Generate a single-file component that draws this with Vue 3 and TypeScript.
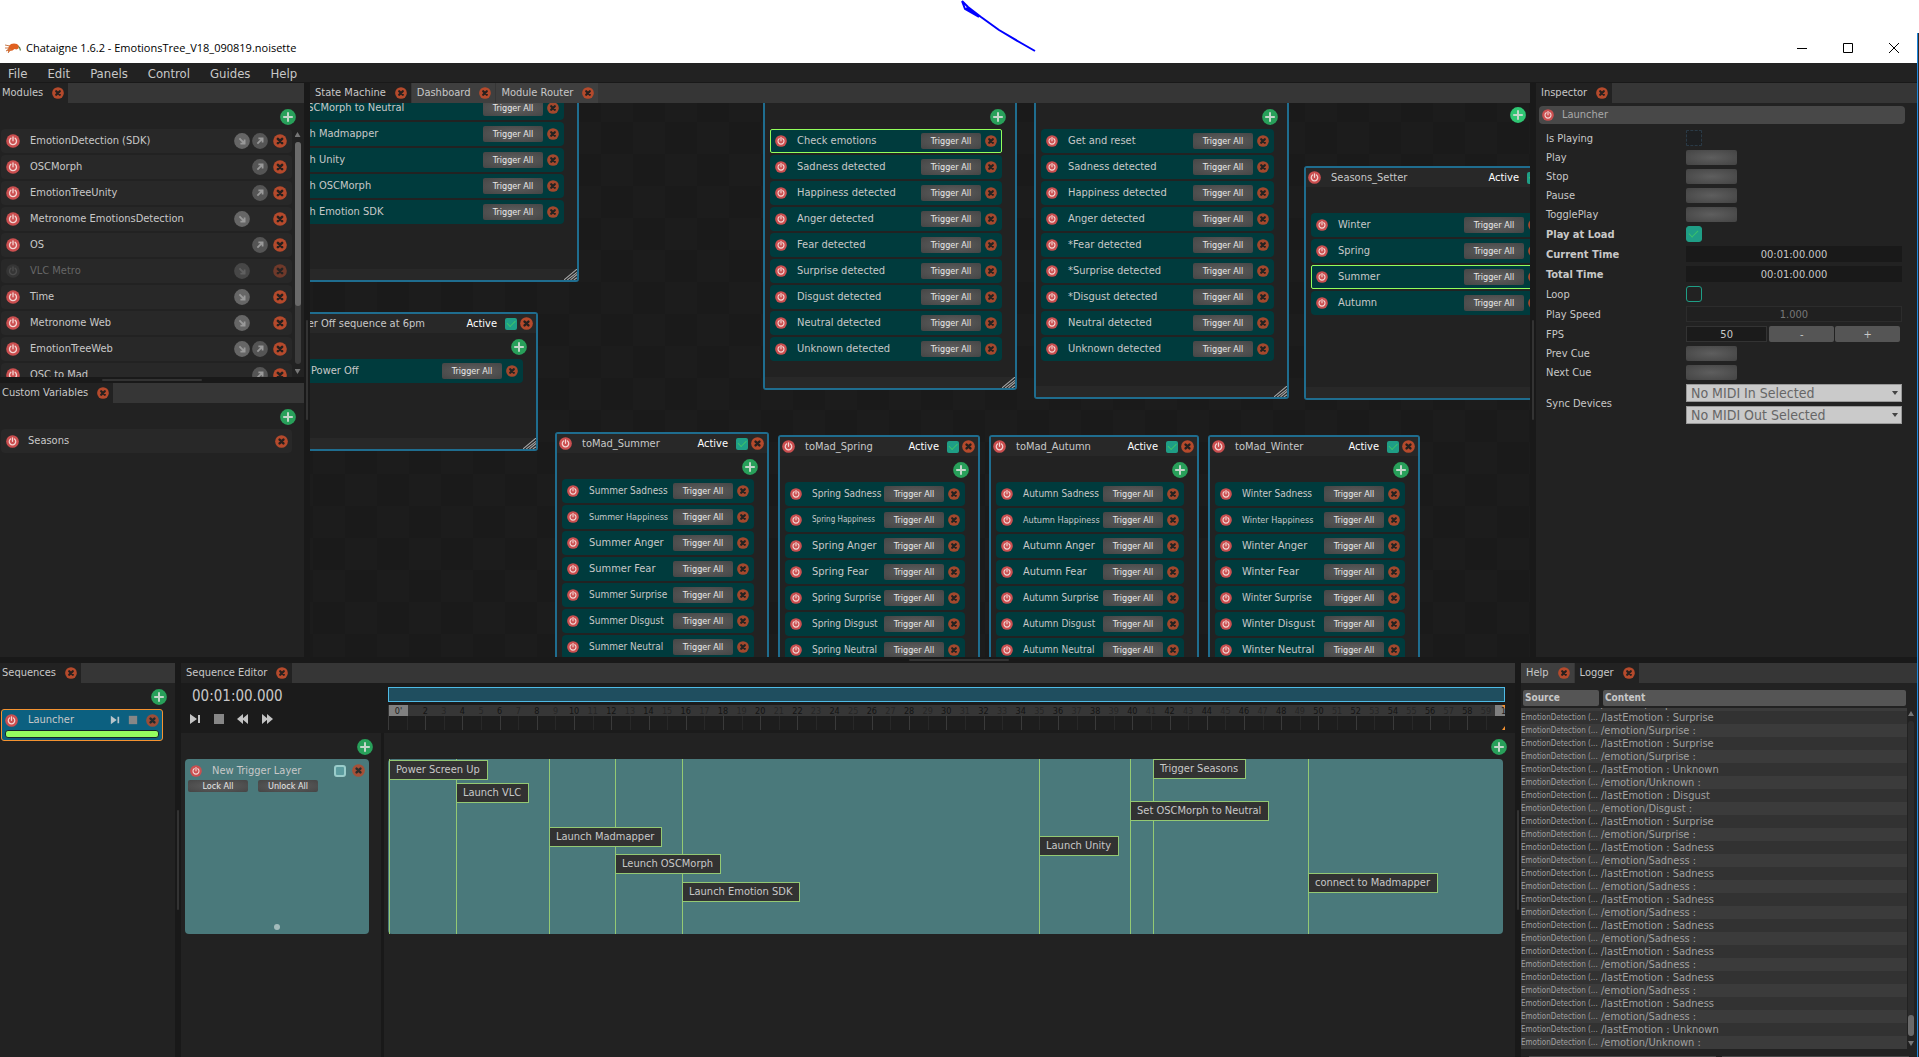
<script setup lang="ts">
interface ModuleItem {
  name: string
  input?: boolean
  output?: boolean
  off?: boolean
}

interface StateRow {
  label: string
  size?: 'md' | 'sm' | 'xs'
  current?: boolean
}

interface StateBox {
  name?: string
  left: number
  top: number
  width: number
  height: number
  rows: StateRow[]
}

interface Cue {
  name: string
  at: number
  y: number
}

const menus = ['File', 'Edit', 'Panels', 'Control', 'Guides', 'Help']

const modules: ModuleItem[] = [
  { name: 'EmotionDetection (SDK)', input: true, output: true },
  { name: 'OSCMorph', output: true },
  { name: 'EmotionTreeUnity', output: true },
  { name: 'Metronome EmotionsDetection', input: true },
  { name: 'OS', output: true },
  { name: 'VLC Metro', input: true, off: true },
  { name: 'Time', input: true },
  { name: 'Metronome Web', input: true },
  { name: 'EmotionTreeWeb', input: true, output: true },
  { name: 'OSC to Mad', output: true },
]

const emotions = ['Sadness', 'Happiness', 'Anger', 'Fear', 'Surprise', 'Disgust', 'Neutral']

function rows(...labels: string[]): StateRow[] {
  return labels.map((label) => ({ label }))
}

function seasonRows(season: string, sizes: StateRow['size'][]): StateRow[] {
  return emotions.map((e, i) => ({ label: `${season} ${e}`, size: sizes[i] }))
}

// Positions are relative to the top left corner of the canvas.
const states: StateBox[] = [
  {
    left: -64, top: -54, width: 333, height: 233,
    rows: rows('Set OSCMorph to Neutral', 'Launch Madmapper', 'Launch Unity', 'Launch OSCMorph', 'Launch Emotion SDK'),
  },
  {
    name: 'Power Off sequence at 6pm', left: -49, top: 209, width: 277, height: 139,
    rows: rows('PC Power Off'),
  },
  {
    left: 453, top: -21, width: 254, height: 308,
    rows: [
      { label: 'Check emotions', current: true },
      ...rows('Sadness detected', 'Happiness detected', 'Anger detected', 'Fear detected',
        'Surprise detected', 'Disgust detected', 'Neutral detected', 'Unknown detected'),
    ],
  },
  {
    left: 724, top: -21, width: 255, height: 317,
    rows: rows('Get and reset', 'Sadness detected', 'Happiness detected', 'Anger detected', '*Fear detected',
      '*Surprise detected', '*Disgust detected', 'Neutral detected', 'Unknown detected'),
  },
  {
    name: 'Seasons_Setter', left: 994, top: 63, width: 256, height: 234,
    rows: [{ label: 'Winter' }, { label: 'Spring' }, { label: 'Summer', current: true }, { label: 'Autumn' }],
  },
  {
    name: 'toMad_Summer', left: 245, top: 329, width: 214, height: 260,
    rows: seasonRows('Summer', ['md', 'sm', undefined, undefined, 'md', 'md', 'md']),
  },
  {
    name: 'toMad_Spring', left: 468, top: 332, width: 202, height: 260,
    rows: seasonRows('Spring', ['md', 'xs', undefined, undefined, 'md', 'md', 'md']),
  },
  {
    name: 'toMad_Autumn', left: 679, top: 332, width: 210, height: 260,
    rows: seasonRows('Autumn', ['md', 'sm', undefined, undefined, 'md', 'md', 'md']),
  },
  {
    name: 'toMad_Winter', left: 898, top: 332, width: 212, height: 260,
    rows: seasonRows('Winter', ['md', 'sm', undefined, undefined, 'md', undefined, undefined]),
  },
]

// Cue positions are percentages of the sequence length.
const cues: Cue[] = [
  { name: 'Power Screen Up', at: 0.09, y: 1 },
  { name: 'Launch VLC', at: 6.1, y: 24 },
  { name: 'Launch Madmapper', at: 14.44, y: 68 },
  { name: 'Leunch OSCMorph', at: 20.36, y: 95 },
  { name: 'Launch Emotion SDK', at: 26.37, y: 123 },
  { name: 'Launch Unity', at: 58.39, y: 77 },
  { name: 'Trigger Seasons', at: 68.61, y: 0 },
  { name: 'Set OSCMorph to Neutral', at: 66.55, y: 42 },
  { name: 'connect to Madmapper', at: 82.51, y: 114 },
]

const seconds = Array.from({ length: 59 }, (_, i) => i + 1)

const detected = ['Surprise', 'Surprise', 'Unknown', 'Disgust', 'Surprise', 'Sadness', 'Sadness',
  'Sadness', 'Sadness', 'Sadness', 'Sadness', 'Sadness', 'Unknown']
const log = ['/emotion/Surprise :', ...detected.flatMap((e) => [`/lastEmotion : ${e}`, `/emotion/${e} :`])]
</script>

<template>
  <div class="app">
    <svg class="defs" aria-hidden="true">
      <symbol id="i-power" viewBox="0 0 16 16">
        <circle cx="8" cy="8" r="7.8" fill="#cb4f50" />
        <path d="M5.6 4.9a4 4 0 1 0 4.8 0" fill="none" stroke="#f3d6d4" stroke-width="1.5" stroke-linecap="round" />
        <path d="M8 3.4v4.4" stroke="#f3d6d4" stroke-width="1.5" stroke-linecap="round" />
      </symbol>
      <symbol id="i-remove" viewBox="0 0 16 16">
        <circle cx="8" cy="8" r="7.8" fill="#b54a2c" />
        <path d="M5.6 5.6l4.8 4.8M10.400 5.6l-4.8 4.8" stroke="#26201e" stroke-width="3" stroke-linecap="round" />
      </symbol>
      <symbol id="i-add" viewBox="0 0 16 16">
        <circle cx="8" cy="8" r="7.9" fill="currentColor" />
        <path d="M8 3.2v9.6M3.200 8h9.6" stroke="#c3d6ca" stroke-width="2" />
      </symbol>
      <symbol id="i-in" viewBox="0 0 16 16">
        <circle cx="8" cy="8" r="7.9" fill="#666" />
        <path d="M5.4 5.4l4.6 4.6M10.6 6.4v4.2H6.4" fill="none" stroke="#999" stroke-width="1.8" />
      </symbol>
      <symbol id="i-out" viewBox="0 0 16 16">
        <circle cx="8" cy="8" r="7.9" fill="#555" />
        <path d="M5.4 10.6L10 6M6.4 5.4h4.2v4.2" fill="none" stroke="#999" stroke-width="1.8" />
      </symbol>
      <symbol id="i-play" viewBox="0 0 12 12">
        <path d="M1 1l7 5-7 5zM9 2h2v8H9z" fill="currentColor" />
      </symbol>
      <symbol id="i-stop" viewBox="0 0 12 12">
        <rect x="1" y="1" width="10" height="10" fill="currentColor" />
      </symbol>
      <symbol id="i-rew" viewBox="0 0 12 12">
        <path d="M0 6l6-5v10zM5 6l6-5v10z" fill="currentColor" />
      </symbol>
      <symbol id="i-fwd" viewBox="0 0 12 12">
        <path d="M12 6L6 1v10zM7 6L1 1v10z" fill="currentColor" />
      </symbol>
      <symbol id="i-grip" viewBox="0 0 12 10">
        <path d="M0 10L12 0M3 10l9-7M6 10l6-5M9 10l3-2" stroke="#a8a8a8" stroke-width="1" />
      </symbol>
    </svg>

    <div class="above">
      <svg class="scribble" viewBox="0 0 78 54" aria-hidden="true">
        <path d="M1 1l3 8 14 8M1 1l6 6 13 10 18 13 22 13 14 8M5 8l13 9" fill="none" stroke="#0000ff" stroke-width="2" stroke-linejoin="round" />
      </svg>
    </div>

    <div class="window">
      <header class="titlebar">
        <svg class="logo" viewBox="0 0 16 12" aria-hidden="true">
          <path d="M4 4l2-2 3-.5 3 .5 2 2-.5 2.500-2 1-2-.5-2 1.500-3 .5-1 2-.5-2.500-2 .5 2-2z" fill="#e0601f" />
          <path d="M0 3l5 1M0 6h4M1 9l4-2M3 11l3-4" stroke="#c97a4a" stroke-width="1" />
          <path d="M13 4l2 1 1 3-1 1-1-3z" fill="#5d7f4c" />
        </svg>
        <span class="title">Chataigne 1.6.2 - EmotionsTree_V18_090819.noisette</span>
        <div class="winbtns">
          <button aria-label="Minimize"><svg viewBox="0 0 10 10"><path d="M0 5.500h10" /></svg></button>
          <button aria-label="Maximize"><svg viewBox="0 0 10 10"><path d="M.5.5h9v9h-9z" /></svg></button>
          <button aria-label="Close"><svg viewBox="0 0 10 10"><path d="M0 0l10 10M10 0L0 10" /></svg></button>
        </div>
      </header>

      <nav class="menubar">
        <button v-for="m in menus" :key="m">{{ m }}</button>
      </nav>

      <div class="upper">
        <div class="side">
          <section class="panel modules">
            <div class="tabs edge">
              <div class="tab active"><span>Modules</span><button class="ic s12" aria-label="Close Modules"><svg><use href="#i-remove" /></svg></button></div>
            </div>
            <div class="addbar"><button class="ic s16 add" aria-label="Add module"><svg><use href="#i-add" /></svg></button></div>
            <div class="scroller">
              <ul class="items">
                <li v-for="m in modules" :key="m.name" class="item" :class="{ off: m.off }">
                  <button class="ic s14" aria-label="Enable"><svg><use href="#i-power" /></svg></button>
                  <span class="name">{{ m.name }}</span>
                  <span class="ic s16"><svg v-if="m.input"><use href="#i-in" /></svg></span>
                  <span class="ic s16"><svg v-if="m.output"><use href="#i-out" /></svg></span>
                  <button class="ic s14 rm" aria-label="Remove"><svg><use href="#i-remove" /></svg></button>
                </li>
              </ul>
              <div class="sbar"><i class="up"></i><div class="rail"><div class="thumb"></div></div><i class="down"></i></div>
            </div>
          </section>
          <div class="split h"></div>
          <section class="panel grow">
            <div class="tabs edge">
              <div class="tab active"><span>Custom Variables</span><button class="ic s12" aria-label="Close Custom Variables"><svg><use href="#i-remove" /></svg></button></div>
            </div>
            <div class="addbar"><button class="ic s16 add" aria-label="Add variable group"><svg><use href="#i-add" /></svg></button></div>
            <ul class="items">
              <li class="item small">
                <button class="ic s13" aria-label="Enable"><svg><use href="#i-power" /></svg></button>
                <span class="name">Seasons</span>
                <button class="ic s13" aria-label="Remove"><svg><use href="#i-remove" /></svg></button>
              </li>
            </ul>
          </section>
        </div>

        <div class="split v top"></div>

        <section class="panel grow">
          <div class="tabs">
            <div class="tab active"><span>State Machine</span><button class="ic s12" aria-label="Close State Machine"><svg><use href="#i-remove" /></svg></button></div>
            <div class="tab"><span>Dashboard</span><button class="ic s12" aria-label="Close Dashboard"><svg><use href="#i-remove" /></svg></button></div>
            <div class="tab"><span>Module Router</span><button class="ic s12" aria-label="Close Module Router"><svg><use href="#i-remove" /></svg></button></div>
          </div>
          <div class="canvas">
            <article
              v-for="(s, i) in states" :key="i" class="state"
              :style="{ left: s.left + 'px', top: s.top + 'px', width: s.width + 'px', height: s.height + 'px' }"
            >
              <div class="state-head">
                <template v-if="s.name">
                  <button class="ic s13" aria-label="Enable"><svg><use href="#i-power" /></svg></button>
                  <span class="name">{{ s.name }}</span>
                  <label class="active-box">Active <input type="checkbox" class="check" checked></label>
                  <button class="ic s13" aria-label="Remove"><svg><use href="#i-remove" /></svg></button>
                </template>
              </div>
              <div class="state-add"><button class="ic s16 add" aria-label="Add action"><svg><use href="#i-add" /></svg></button></div>
              <div v-for="r in s.rows" :key="r.label" class="action" :class="{ current: r.current }">
                <button class="ic s12" aria-label="Enable"><svg><use href="#i-power" /></svg></button>
                <span class="name" :class="r.size">{{ r.label }}</span>
                <button class="trig">Trigger All</button>
                <button class="ic s12 dim" aria-label="Remove"><svg><use href="#i-remove" /></svg></button>
              </div>
              <div class="state-foot"><svg><use href="#i-grip" /></svg></div>
            </article>
            <button class="ic s16 add bright" aria-label="Add state"><svg><use href="#i-add" /></svg></button>
          </div>
        </section>

        <div class="split v top"></div>

        <section class="panel inspector">
          <div class="tabs">
            <div class="tab active"><span>Inspector</span><button class="ic s12" aria-label="Close Inspector"><svg><use href="#i-remove" /></svg></button></div>
          </div>
          <div class="insp-head"><button class="ic s12" aria-label="Enable"><svg><use href="#i-power" /></svg></button><span>Launcher</span></div>
          <div class="form">
            <label class="field"><span>Is Playing</span><input type="checkbox" class="box ghost" disabled></label>
            <div class="field"><span>Play</span><button class="pulse" aria-label="Play"></button></div>
            <div class="field"><span>Stop</span><button class="pulse" aria-label="Stop"></button></div>
            <div class="field"><span>Pause</span><button class="pulse" aria-label="Pause"></button></div>
            <div class="field"><span>TogglePlay</span><button class="pulse" aria-label="TogglePlay"></button></div>
            <label class="field strong"><span>Play at Load</span><input type="checkbox" class="box check" checked></label>
            <label class="field strong"><span>Current Time</span><input type="text" class="value" value="00:01:00.000"></label>
            <label class="field strong"><span>Total Time</span><input type="text" class="value" value="00:01:00.000"></label>
            <label class="field"><span>Loop</span><input type="checkbox" class="box"></label>
            <label class="field"><span>Play Speed</span><input type="text" class="value lined faint" value="1.000"></label>
            <div class="field">
              <label for="fps">FPS</label><input id="fps" type="text" class="value lined fps" value="50">
              <div class="stepper"><button>-</button><button>+</button></div>
            </div>
            <div class="field"><span>Prev Cue</span><button class="pulse" aria-label="Prev Cue"></button></div>
            <div class="field"><span>Next Cue</span><button class="pulse" aria-label="Next Cue"></button></div>
            <div class="field sync">
              <span>Sync Devices</span>
              <div class="selects">
                <div class="select"><select aria-label="MIDI In"><option>No MIDI In Selected</option></select></div>
                <div class="select"><select aria-label="MIDI Out"><option>No MIDI Out Selected</option></select></div>
              </div>
            </div>
          </div>
        </section>
      </div>

      <div class="split h wide"></div>

      <div class="lower">
        <section class="panel sequences">
          <div class="tabs edge">
            <div class="tab active"><span>Sequences</span><button class="ic s12" aria-label="Close Sequences"><svg><use href="#i-remove" /></svg></button></div>
          </div>
          <div class="addbar"><button class="ic s16 add" aria-label="Add sequence"><svg><use href="#i-add" /></svg></button></div>
          <div class="seq">
            <div class="seq-row">
              <button class="ic s13" aria-label="Enable"><svg><use href="#i-power" /></svg></button>
              <span class="name">Launcher</span>
              <button class="ic s10 play" aria-label="Play"><svg><use href="#i-play" /></svg></button>
              <button class="ic s10 stop" aria-label="Stop"><svg><use href="#i-stop" /></svg></button>
              <button class="ic s13 soft" aria-label="Remove"><svg><use href="#i-remove" /></svg></button>
            </div>
            <div class="bar"></div>
          </div>
        </section>

        <div class="split v"></div>

        <section class="panel grow editor">
          <div class="tabs">
            <div class="tab active"><span>Sequence Editor</span><button class="ic s12" aria-label="Close Sequence Editor"><svg><use href="#i-remove" /></svg></button></div>
          </div>
          <div class="ed-top">
            <div class="transport">
              <div class="clock">00:01:00.000</div>
              <div class="ctrls">
                <button class="ic s12" aria-label="Play"><svg><use href="#i-play" /></svg></button>
                <button class="ic s12 stop" aria-label="Stop"><svg><use href="#i-stop" /></svg></button>
                <button class="ic s12" aria-label="Previous cue"><svg><use href="#i-rew" /></svg></button>
                <button class="ic s12" aria-label="Next cue"><svg><use href="#i-fwd" /></svg></button>
              </div>
            </div>
            <div class="timeline">
              <div class="overview"></div>
              <div class="ruler">
                <div class="nums"><span v-for="n in seconds" :key="n" :class="{ even: n % 2 === 0 }">{{ n > 1 ? n : '' }}</span></div>
                <div class="ticks"><i v-for="n in 60" :key="n" :class="{ even: n % 2 === 1 }"></i></div>
                <span class="minute first">0'</span>
                <span class="minute last">1'</span>
                <svg class="head" viewBox="0 0 3 25" aria-hidden="true"><path d="M0 0h3v4zM3 21v4H0z" fill="#f59331" /></svg>
              </div>
            </div>
          </div>
          <div class="ed-body">
            <div class="layers">
              <div class="addbar"><button class="ic s16 add" aria-label="Add layer"><svg><use href="#i-add" /></svg></button></div>
              <div class="layer">
                <div class="layer-head">
                  <button class="ic s12" aria-label="Enable"><svg><use href="#i-power" /></svg></button>
                  <span class="name">New Trigger Layer</span>
                  <input type="checkbox" class="lbox" aria-label="Mini mode">
                  <button class="ic s13 soft" aria-label="Remove"><svg><use href="#i-remove" /></svg></button>
                </div>
                <div class="locks"><button class="trig">Lock All</button><button class="trig">Unlock All</button></div>
                <div class="knob"></div>
              </div>
            </div>
            <div class="tracks">
              <div class="addbar"><button class="ic s16 add" aria-label="Add track"><svg><use href="#i-add" /></svg></button></div>
              <div class="track">
                <div v-for="c in cues" :key="c.name" class="cue" :style="{ left: c.at + '%' }">
                  <span :style="{ marginTop: c.y + 'px' }">{{ c.name }}</span>
                </div>
              </div>
            </div>
          </div>
        </section>

        <div class="split v"></div>

        <section class="panel logger">
          <div class="tabs">
            <div class="tab"><span>Help</span><button class="ic s12" aria-label="Close Help"><svg><use href="#i-remove" /></svg></button></div>
            <div class="tab active"><span>Logger</span><button class="ic s12" aria-label="Close Logger"><svg><use href="#i-remove" /></svg></button></div>
          </div>
          <div class="log-cols"><button>Source</button><button>Content</button></div>
          <div class="log-body">
            <div class="log-view">
              <table>
                <tbody>
                  <tr v-for="(line, i) in log" :key="i"><td class="src">EmotionDetection (...</td><td>{{ line }}</td></tr>
                </tbody>
              </table>
            </div>
            <div class="sbar end"><i class="up"></i><div class="rail"><div class="thumb"></div></div><i class="down"></i></div>
          </div>
          <div class="log-foot"><i></i><i></i></div>
        </section>
      </div>
    </div>
  </div>
</template>

<style>
html,
body {
  margin: 0;
  background: #fff;
}
</style>

<style scoped>
* {
  box-sizing: border-box;
}

.app {
  height: 100vh;
  display: flex;
  flex-direction: column;
  overflow: hidden;
  background: #fff;
  color: #c8c8c8;
  font: 11px/16px "DejaVu Sans Condensed", "DejaVu Sans", Verdana, sans-serif;
}

button,
input,
select {
  font: inherit;
  color: inherit;
  margin: 0;
  padding: 0;
  border: 0;
  background: none;
}

ul {
  list-style: none;
  margin: 0;
  padding: 0;
}

.defs {
  position: absolute;
  width: 0;
  height: 0;
}

.ic {
  display: block;
  flex: none;
}

.ic svg {
  display: block;
  width: 100%;
  height: 100%;
}

.s10 { width: 10px; height: 10px; }
.s12 { width: 12px; height: 12px; }
.s13 { width: 13px; height: 13px; }
.s14 { width: 14px; height: 14px; }
.s16 { width: 16px; height: 16px; }
.dim { opacity: .9; }
.soft { opacity: .85; }
.add { color: #28a05a; }

.name {
  flex: 1;
  min-width: 0;
  white-space: nowrap;
}

/* Window frame */
.above {
  position: relative;
  height: 33px;
  flex: none;
}

.scribble {
  position: absolute;
  left: 50%;
  top: 0;
  width: 78px;
  height: 54px;
  margin-left: 1px;
}

.window {
  flex: 1;
  min-height: 0;
  display: flex;
  flex-direction: column;
  padding-right: 1px;
  border-right: 1px solid #2a2a2a;
  background: linear-gradient(#1f86dd, #1f86dd) right / 1px 100% no-repeat;
}

.titlebar {
  display: flex;
  align-items: center;
  height: 30px;
  flex: none;
  padding-left: 5px;
  color: #000;
  font-family: "Open Sans", "Noto Sans", sans-serif;
}

.logo {
  width: 16px;
  height: 12px;
  margin-right: 5px;
}

.title { flex: 1; }

.winbtns { display: flex; }

.winbtns button {
  width: 46px;
  height: 30px;
  display: grid;
  place-items: center;
}

.winbtns svg {
  width: 10px;
  height: 10px;
  fill: none;
  stroke: #000;
  stroke-width: 1;
}

.menubar {
  display: flex;
  gap: 20px;
  height: 20px;
  flex: none;
  padding: 2px 0 0 8px;
  background: #222;
  border-bottom: 1px solid #191919;
  font-size: 13px;
}

.upper {
  flex: 1;
  min-height: 0;
  display: flex;
  background: #191919;
}

.lower {
  height: 394px;
  flex: none;
  display: flex;
  background: #191919;
}

.side {
  width: 304px;
  flex: none;
  display: flex;
  flex-direction: column;
}

.panel {
  display: flex;
  flex-direction: column;
  min-width: 0;
  min-height: 0;
  background: #222;
}

.grow { flex: 1; }
.modules { height: 294px; flex: none; }
.inspector { width: 381px; flex: none; }
.sequences { width: 175px; flex: none; }
.logger { width: 396px; flex: none; }

.split {
  flex: none;
  display: flex;
  align-items: center;
  justify-content: center;
  background: #191919;
}

.split::after {
  content: "";
  background: #333;
  border-radius: 1px;
}

.split.h { height: 6px; }
.split.h::after { width: 100px; height: 2px; }
.split.v { width: 6px; }
.split.v::after { width: 2px; height: 100px; }

/* Tabs */
.tabs {
  display: flex;
  gap: 1px;
  height: 20px;
  flex: none;
  background: #363636;
}

.tab {
  display: flex;
  align-items: center;
  gap: 9px;
  padding: 0 4px 0 5px;
  background: #3f3f3f;
}

.edge .tab { padding-left: 2px; }
.tab.active { background: #222; }

.addbar {
  display: flex;
  justify-content: flex-end;
  align-items: center;
  height: 26px;
  flex: none;
  padding: 2px 8px 0 0;
}

/* Item lists */
.scroller {
  flex: 1;
  min-height: 0;
  display: flex;
  overflow: hidden;
}

.items {
  flex: 1;
  display: flex;
  flex-direction: column;
  gap: 2px;
  padding: 0 1px;
}

.item {
  display: flex;
  align-items: center;
  gap: 2px;
  height: 24px;
  flex: none;
  padding: 0 5px;
  border-radius: 4px;
  background: #282828;
}

.item .name { margin-left: 8px; }
.item .rm { margin-left: 3px; }
.item.small { width: 291px; padding-right: 4px; }
.item.small .name { margin-left: 7px; }
.off { color: #666; }
.off .ic { opacity: .5; }
.off .ic:first-child { filter: grayscale(1); opacity: .2; }

.sbar {
  width: 11px;
  flex: none;
  display: flex;
  flex-direction: column;
  align-items: center;
  gap: 5px;
  padding: 3px 2px 3px 0;
}

.sbar i {
  width: 6px;
  height: 5px;
  background: #777;
  clip-path: polygon(50% 0, 100% 100%, 0 100%);
}

.sbar .down { clip-path: polygon(0 0, 100% 0, 50% 100%); }

.rail {
  flex: 1;
  width: 6px;
  border-radius: 3px;
  background: #3d3d3d;
}

.thumb {
  height: 74%;
  border-radius: 3px;
  background: #6a6a6a;
}

/* State machine canvas */
.canvas {
  flex: 1;
  min-height: 0;
  position: relative;
  overflow: hidden;
  background: repeating-conic-gradient(#1a1a1a 0 25%, #1c1c1c 0 50%) 3px 19px / 64px 64px;
}

.bright {
  position: absolute;
  right: 4px;
  top: 4px;
  color: #2fc673;
}

.state {
  position: absolute;
  display: flex;
  flex-direction: column;
  border: 2px solid #1f6d8f;
  border-radius: 3px;
  background: #222;
}

.state-head {
  display: flex;
  align-items: center;
  height: 19px;
  flex: none;
  padding: 0 3px 0 2px;
  background: #282828;
}

.state-head .name { margin-left: 10px; }

.active-box {
  display: flex;
  align-items: center;
  gap: 8px;
  margin-right: 3px;
  color: #fff;
}

.check {
  appearance: none;
  width: 12px;
  height: 12px;
  border-radius: 2px;
  background: #1f9e86;
  display: grid;
  place-items: center;
}

.check::after {
  content: "";
  width: 60%;
  height: 30%;
  border: solid #3cc46a;
  border-width: 0 0 1px 1px;
  transform: rotate(-45deg);
  margin-bottom: 2px;
}

.state-add {
  display: flex;
  justify-content: flex-end;
  height: 26px;
  flex: none;
  padding: 6px 9px 0 0;
}

.action {
  display: flex;
  align-items: center;
  height: 24px;
  flex: none;
  margin: 0 13px 2px 5px;
  padding: 0 5px;
  border-radius: 4px;
  background: #003b3d;
}

.action .name { margin: 0 4px 0 10px; }
.action .md { font-size: 10px; }
.action .sm { font-size: 9px; }
.action .xs { font-size: 8px; }

.current {
  padding: 0 4px;
  border: 1px solid #92ff5c;
  border-radius: 2px;
}

.trig {
  width: 60px;
  height: 16px;
  flex: none;
  margin-right: 4px;
  border-radius: 2px;
  background: radial-gradient(ellipse at center, #606060, #454545);
  color: #e8e8e8;
  font-size: 9px;
  line-height: 16px;
}

.state-foot {
  margin-top: auto;
  height: 11px;
  flex: none;
  display: flex;
  justify-content: flex-end;
  background: #282828;
}

.state-foot svg {
  width: 13px;
  height: 11px;
}

/* Inspector */
.insp-head {
  display: flex;
  align-items: center;
  gap: 8px;
  height: 18px;
  flex: none;
  margin: 3px 12px 6px 3px;
  padding: 0 3px;
  border-radius: 4px;
  background: #484848;
  color: #a8a8a8;
}

.form {
  display: flex;
  flex-direction: column;
  gap: 4px;
  padding: 0 15px 0 10px;
}

.field {
  display: flex;
  align-items: center;
  line-height: 15px;
}

.field > :first-child {
  width: 140px;
  flex: none;
}

.strong > span { font-weight: bold; }

.pulse {
  width: 51px;
  height: 15px;
  border-radius: 2px;
  background: radial-gradient(ellipse at center, #5e5e5e, #444);
}

.box {
  appearance: none;
  width: 16px;
  height: 16px;
  border: 1px solid #1f9e86;
  border-radius: 3px;
}

.ghost {
  border: 1px dashed #2a3a46;
  border-radius: 1px;
  background: #1d1f21;
}

.value {
  flex: 1;
  min-width: 0;
  height: 16px;
  background: #191919;
  color: #c8c8c8;
  text-align: center;
}

.lined {
  border: 1px solid #2c2c2c;
  background: #202020;
}

.faint { color: #777; }

.fps {
  flex: 37;
  background: #1b1b1b;
  border-color: #333;
}

.stepper {
  flex: 61;
  display: flex;
  gap: 1px;
  margin: 0 2px;
}

.stepper button {
  flex: 1;
  height: 16px;
  border-radius: 2px;
  background: #555;
}

.sync > span { line-height: 40px; }

.selects {
  flex: 1;
  display: flex;
  flex-direction: column;
  gap: 4px;
}

.select {
  position: relative;
  height: 18px;
}

.select::after {
  content: "";
  position: absolute;
  right: 4px;
  top: 7px;
  width: 6px;
  height: 4px;
  background: #444;
  clip-path: polygon(0 0, 100% 0, 50% 100%);
}

.select select {
  appearance: none;
  display: block;
  width: 100%;
  height: 18px;
  padding-left: 4px;
  border: 1px solid #999;
  background: #cacaca;
  color: #666;
  font-size: 14px;
  line-height: 16px;
}

/* Sequences */
.seq {
  display: flex;
  flex-direction: column;
  height: 32px;
  margin: 0 12px 0 1px;
  border: 1px solid #f59331;
  border-radius: 3px;
  background: #0c6080;
}

.seq-row {
  display: flex;
  align-items: center;
  gap: 8px;
  height: 20px;
  padding: 0 3px;
}

.seq-row .name { margin-left: 2px; }
.play { color: #b7c4ca; }
.stop { color: #878787; }

.bar {
  height: 8px;
  margin: 0 3px;
  border: 1px solid #16262c;
  border-radius: 3px;
  background: #96ff5f;
}

/* Sequence editor */
.editor { background: #191919; }

.ed-top {
  height: 50px;
  flex: none;
  display: flex;
  background: #1b1b1b;
}

.transport {
  width: 207px;
  flex: none;
  padding: 4px 0 0 8px;
}

.clock {
  padding-left: 3px;
  font-size: 15px;
  line-height: 18px;
}

.ctrls {
  display: flex;
  gap: 12px;
  margin-top: 8px;
  color: #c4c4c4;
}

.timeline {
  flex: 1;
  min-width: 0;
  padding: 4px 10px 0 0;
}

.overview {
  height: 15px;
  border: 1px solid #4fbbe6;
  background: #1f4e5f;
}

.ruler {
  position: relative;
  margin-top: 3px;
  overflow: hidden;
}

.nums {
  display: flex;
  height: 11px;
  padding: 0 calc(100% / 120);
  background: #363636;
  font-size: 9px;
  line-height: 12px;
}

.nums span {
  flex: 1;
  text-align: center;
  color: #262626;
}

.nums .even { color: #141414; }

.ticks {
  display: flex;
  height: 14px;
  background: #1d1d1d;
}

.ticks i {
  flex: 1;
  border-left: 1px solid #282828;
}

.ticks .even { border-color: #3a3a3a; }

.minute {
  position: absolute;
  top: 0;
  height: 11px;
  background: #808080;
  color: #1c1c1c;
  font-size: 9px;
  line-height: 12px;
}

.first {
  left: 1px;
  width: 19px;
  text-align: center;
}

.last {
  right: 0;
  width: 10px;
  padding-left: 6px;
  overflow: hidden;
}

.head {
  position: absolute;
  right: 0;
  top: 0;
  width: 3px;
  height: 25px;
}

.ed-body {
  flex: 1;
  min-height: 0;
  display: flex;
  gap: 3px;
}

.layers {
  width: 200px;
  flex: none;
  padding: 0 12px 0 4px;
  background: #222;
}

.layers .addbar,
.tracks .addbar {
  padding-right: 0;
  margin-right: -4px;
}

.layer {
  height: 175px;
  display: flex;
  flex-direction: column;
  align-items: center;
  border-radius: 4px;
  background: #4a797b;
}

.layer-head {
  align-self: stretch;
  display: flex;
  align-items: center;
  height: 21px;
  padding: 2px 4px 0 5px;
}

.layer-head .name { margin-left: 10px; }

.lbox {
  appearance: none;
  width: 12px;
  height: 12px;
  margin-right: 6px;
  border: 2px solid #9accca;
  border-radius: 3px;
  background: #5c9c9f;
}

.locks {
  align-self: stretch;
  display: flex;
  gap: 6px;
  padding-left: 3px;
}

.locks .trig {
  height: 12px;
  line-height: 12px;
}

.knob {
  width: 6px;
  height: 6px;
  margin: auto 0 4px;
  border-radius: 50%;
  background: #a3bbbb;
}

.tracks {
  flex: 1;
  min-width: 0;
  padding: 0 12px 0 4px;
  background: #222;
}

.track {
  position: relative;
  height: 175px;
  border-radius: 4px;
  background: #4a797b;
}

.cue {
  position: absolute;
  top: 0;
  bottom: 0;
  display: flex;
  align-items: flex-start;
  border-left: 1px solid #94c973;
}

.cue span {
  position: relative;
  z-index: 1;
  margin-left: -1px;
  padding: 1px 7px 1px 6px;
  border: 1px solid #94c973;
  background: #323232;
  white-space: nowrap;
}

/* Logger */
.log-cols {
  display: flex;
  gap: 4px;
  height: 25px;
  flex: none;
  padding: 7px 11px 2px 2px;
}

.log-cols button {
  width: 76px;
  padding: 0 2px;
  border-radius: 2px;
  background: #555;
  text-align: left;
  font-size: 10px;
  font-weight: bold;
}

.log-cols button:last-child { flex: 1; }

.log-body {
  height: 341px;
  flex: none;
  display: flex;
}

.log-view {
  flex: 1;
  overflow: hidden;
  display: flex;
  flex-direction: column;
  justify-content: flex-end;
}

.log-view table {
  width: 100%;
  flex: none;
  border-collapse: collapse;
  table-layout: fixed;
}

.log-view td {
  height: 13px;
  padding: 0;
  line-height: 13px;
  white-space: nowrap;
  color: #a0a0a0;
}

.log-view .src {
  width: 80px;
  font-size: 8px;
}

.log-view tr { background: #323232; }
.log-view tr:nth-child(odd) { background: #3b3b3b; }

.sbar.end { width: 10px; }
.end .rail { display: flex; flex-direction: column; justify-content: flex-end; background: #2c2c2c; }
.end .thumb { height: 21px; }

.log-foot {
  flex: 1;
  display: flex;
  align-items: flex-end;
  gap: 6px;
  padding: 0 8px;
}

.log-foot i {
  flex: 1;
  height: 1px;
  background: #484848;
}
</style>
